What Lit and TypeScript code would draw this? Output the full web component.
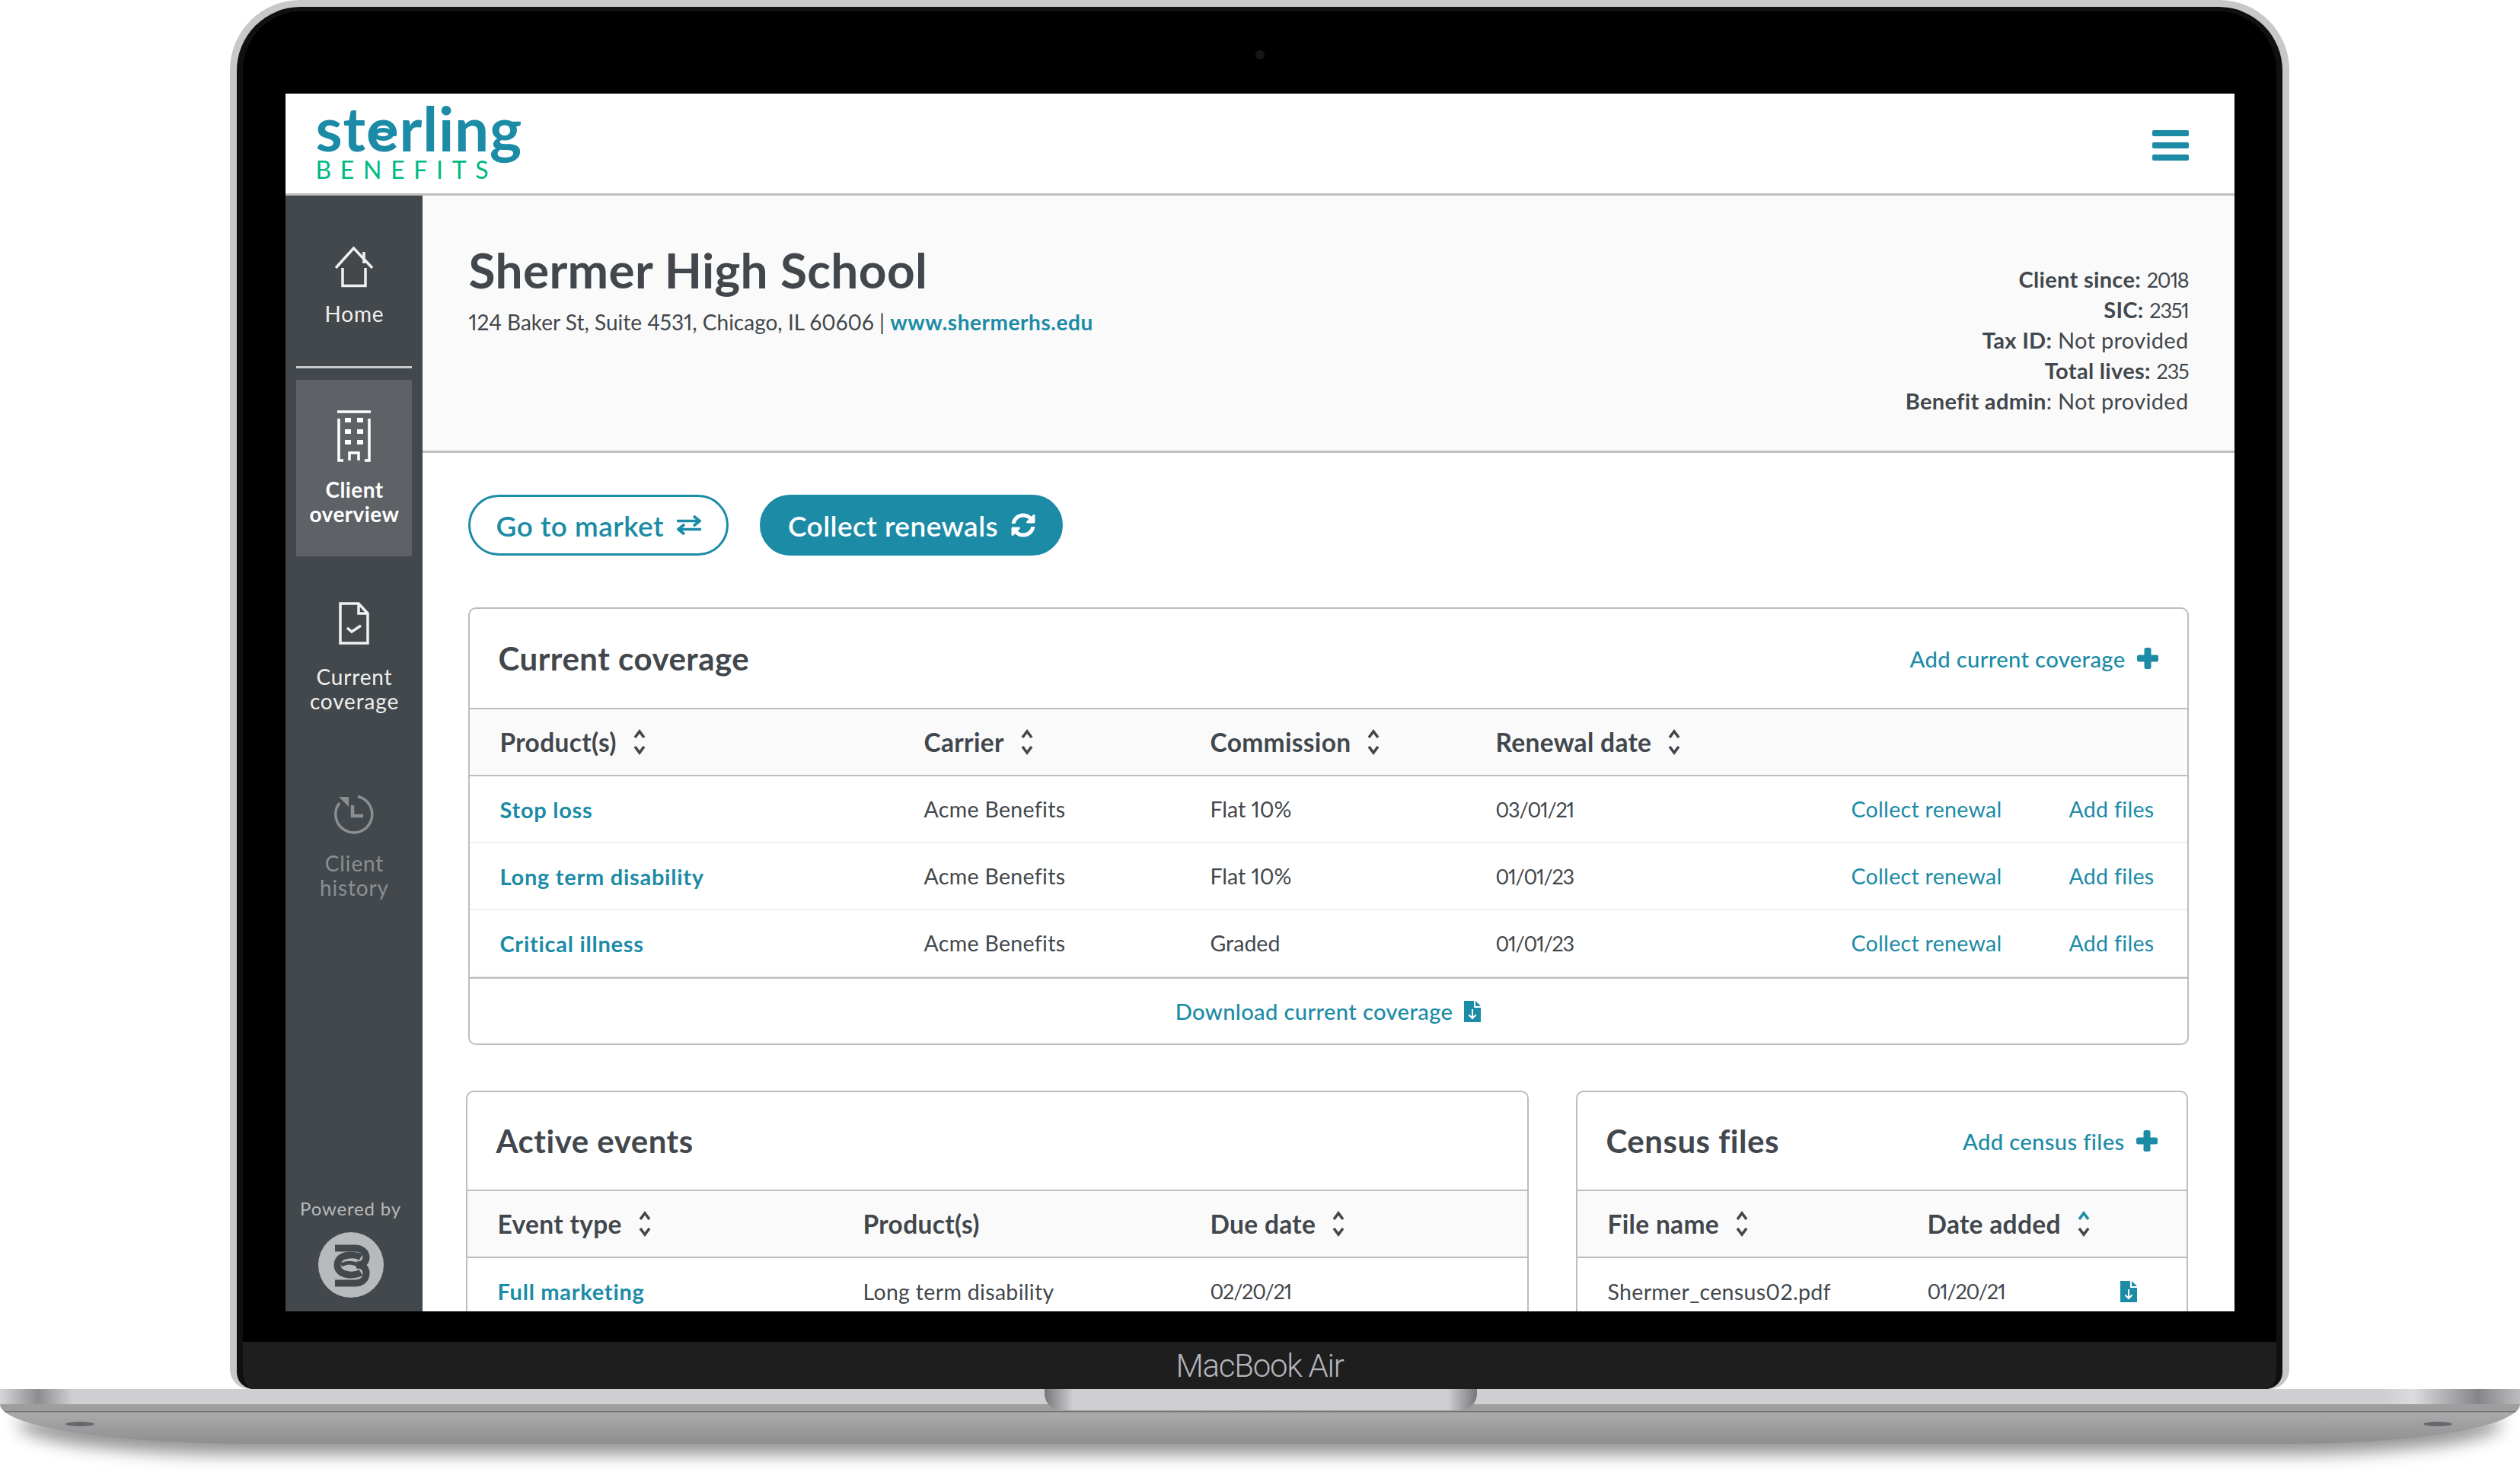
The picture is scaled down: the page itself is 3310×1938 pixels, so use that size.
import { LitElement, html, css, svg } from 'lit'
import { customElement } from 'lit/decorators.js'

const coverage = [
  { product: 'Stop loss', carrier: 'Acme Benefits', commission: 'Flat 10%', renewal: '03/01/21' },
  { product: 'Long term disability', carrier: 'Acme Benefits', commission: 'Flat 10%', renewal: '01/01/23' },
  { product: 'Critical illness', carrier: 'Acme Benefits', commission: 'Graded', renewal: '01/01/23' },
]

const meta = [
  ['Client since:', ' ', '2018'],
  ['SIC:', ' ', '2351'],
  ['Tax ID:', ' ', 'Not provided'],
  ['Total lives:', ' ', '235'],
  ['Benefit admin', ': ', 'Not provided'],
]

const SYNC =
  'M370.72 133.28C339.458 104.008 298.888 87.962 255.848 88c-77.458.068-144.328 53.178-162.791 126.85-1.344 5.363-6.122 9.15-11.651 9.15H24.103c-7.498 0-13.194-6.807-11.807-14.176C33.933 94.924 134.813 8 256 8c66.448 0 126.791 26.136 171.315 68.685L463.03 40.97C478.149 25.851 504 36.559 504 57.941V192c0 13.255-10.745 24-24 24H345.941c-21.382 0-32.09-25.851-16.971-40.971l41.75-41.749zM32 296h134.059c21.382 0 32.09 25.851 16.971 40.971l-41.75 41.75c31.262 29.273 71.835 45.319 114.876 45.28 77.418-.07 144.315-53.144 162.787-126.849 1.344-5.363 6.122-9.15 11.651-9.15h57.304c7.498 0 13.194 6.807 11.807 14.176C478.067 417.076 377.187 504 256 504c-66.448 0-126.791-26.136-171.315-68.685L48.97 471.03C33.851 486.149 8 475.441 8 454.059V320c0-13.255 10.745-24 24-24z'

const sortIcon = (active = false) => html`
  <svg class="sort" width="16" height="34" viewBox="0 0 16 34" fill="none" stroke-width="3.6">
    <path d="M2 11 8 3l6 8" stroke=${active ? '#1b8ba6' : '#41474c'} />
    <path d="M2 23l6 8 6-8" stroke="#41474c" />
  </svg>
`

const plusIcon = html`
  <svg width="28" height="28" viewBox="0 0 28 28" fill="#1b8ba6">
    <rect x="9.5" y="0" width="9" height="28" rx="2.5" />
    <rect x="0" y="9.5" width="28" height="9" rx="2.5" />
  </svg>
`

const fileIcon = html`
  <svg class="file" width="22" height="28" viewBox="0 0 22 28">
    <path d="M0 0h13v9h9v19H0z" fill="#1b8ba6" />
    <path d="M15 0l7 7h-7z" fill="#1b8ba6" />
    <path d="M11 11v12M6.5 18.5 11 23l4.500-4.500" fill="none" stroke="#fff" stroke-width="2" />
  </svg>
`

const homeIcon = svg`
  <path d="M1 28 24.500 2 49 28M38 7v15" />
  <path d="M10 28v23.500h30V28" />
`
const buildingIcon = svg`
  <path d="M0 2h44" />
  <path d="M2 11v55h6M42 11v55h-6" />
  <path d="M16 66V56h12v10" />
  <path d="M10 13h8M26 13h8M10 28h8M26 28h8M10 42h8M26 42h8" stroke-width="6" />
`
const docIcon = svg`
  <path d="M2 2h24l12 13v39H2z" />
  <path d="M26 2v13h12" />
  <path d="M11 34l6 5 12-8" />
`
const historyIcon = svg`
  <path d="M32 4.500A24 24 0 1 1 8 13" />
  <path d="M7 5h13v13z" fill="currentColor" stroke="none" />
  <path d="M25 16v14h14" stroke-width="4.500" />
`

@customElement('app-root')
export class AppRoot extends LitElement {
  static styles = css`
    :host {
      display: block;
      isolation: isolate;
      width: 3310px;
      height: 1938px;
      overflow: hidden;
      background: #fff;
      color: #41474c;
      font-family: Lato, 'Open Sans', sans-serif;
      font-variant-numeric: proportional-nums;
      letter-spacing: 0.02em;
    }

    a {
      color: #1b8ba6;
      text-decoration: none;
    }

    .num {
      font-size: 27px;
      letter-spacing: -0.045em;
    }

    /* laptop frame */
    .lid {
      box-sizing: border-box;
      width: 2705px;
      height: 1825px;
      margin-left: 302px;
      padding: 9px 9px 0;
      background: #c8c8ca;
      border-radius: 92px 92px 26px 26px;
    }

    .bezel {
      box-sizing: border-box;
      height: 100%;
      display: flex;
      flex-direction: column;
      align-items: center;
      background: #000;
      border: solid #101010;
      border-width: 6px 8px 0;
      border-radius: 84px 84px 22px 22px;
      overflow: hidden;
    }

    .camera {
      flex: none;
      width: 12px;
      height: 12px;
      margin: 51px 0 45px;
      border-radius: 50%;
      background: #16161a;
    }

    .chin {
      flex: none;
      align-self: stretch;
      height: 62px;
      margin-top: 40px;
      display: flex;
      align-items: center;
      justify-content: center;
      background: #1e1e1e;
      color: #b4b4ba;
      font: 300 42px Roboto, sans-serif;
      letter-spacing: -0.03em;
    }

    .base {
      position: relative;
      width: 3310px;
      height: 72px;
    }

    .base-top {
      height: 20px;
      background: linear-gradient(
        90deg,
        #d6d6d8 0,
        #8d8d91 50px,
        #cfcfd1 95px,
        #cfcfd1 3130px,
        #dcdcde 3170px,
        #85858a 3255px,
        #bdbdc0 3310px
      );
    }

    .base-body {
      height: 52px;
      box-sizing: border-box;
      border-bottom-left-radius: 330px 52px;
      border-bottom-right-radius: 300px 52px;
      background: linear-gradient(180deg, #9e9e9f 0, #9e9e9f 9px, #737375 9px, #737375 10px, #ababac 11px, #8e8e90 100%);
    }

    .notch {
      position: absolute;
      left: 1372px;
      top: 0;
      width: 568px;
      height: 28px;
      border-radius: 0 0 22px 22px;
      background: linear-gradient(90deg, #77777b 0, #cfcfd1 38px, #cfcfd1 530px, #77777b 100%);
    }

    .foot {
      position: absolute;
      top: 43px;
      width: 38px;
      height: 6px;
      border-radius: 50%;
      background: #66666c;
    }

    .foot.l {
      left: 86px;
    }

    .foot.r {
      left: 3183px;
    }

    .shadow {
      position: absolute;
      z-index: -1;
      left: 24px;
      right: 24px;
      top: 40px;
      height: 46px;
      border-radius: 0 0 300px 300px / 0 0 40px 40px;
      background: rgba(0, 0, 0, 0.42);
      filter: blur(11px);
    }

    /* app screen */
    .screen {
      flex: none;
      width: 2560px;
      height: 1600px;
      display: flex;
      flex-direction: column;
      background: #fff;
      overflow: hidden;
    }

    .topbar {
      flex: none;
      box-sizing: border-box;
      height: 134px;
      padding: 0 60px 0 40px;
      display: flex;
      align-items: center;
      justify-content: space-between;
      border-bottom: 3px solid #bfbfbf;
    }

    .logo {
      align-self: flex-start;
      display: flex;
      flex-direction: column;
      margin-top: 5px;
    }

    .logo-name {
      font-size: 80px;
      font-weight: 700;
      line-height: 80px;
      letter-spacing: 0.01em;
      color: #1b8ba6;
    }

    .logo-e {
      position: relative;
    }

    .logo-e::before {
      content: '';
      position: absolute;
      left: 8px;
      top: 48px;
      width: 28px;
      height: 17px;
      border-radius: 50%;
      background: #1b8ba6;
    }

    .logo-e::after {
      content: '';
      position: absolute;
      left: 15px;
      top: 54px;
      width: 14px;
      height: 5px;
      border-radius: 50%;
      background: #fff;
    }

    .logo-sub {
      font-size: 32px;
      line-height: 30px;
      letter-spacing: 0.365em;
      color: #00b982;
    }

    .burger {
      display: flex;
      flex-direction: column;
      gap: 8px;
      margin-top: 4px;
    }

    .burger i {
      display: block;
      width: 48px;
      height: 8px;
      border-radius: 2px;
      background: #1b8ba6;
    }

    .app {
      flex: 1;
      min-height: 0;
      display: flex;
    }

    .side {
      flex: none;
      box-sizing: border-box;
      width: 180px;
      padding: 0 14px 18px;
      display: flex;
      flex-direction: column;
      align-items: stretch;
      background: #43484c;
      color: #f0f0f0;
      font-size: 28px;
      line-height: 32px;
      text-align: center;
      letter-spacing: 0.03em;
    }

    .nav {
      box-sizing: border-box;
      display: flex;
      flex-direction: column;
      align-items: center;
    }

    .nav span {
      padding-left: 2px;
    }

    .nav svg {
      display: block;
      fill: none;
      stroke: currentColor;
      stroke-width: 3.5;
    }

    .nav.home {
      height: 227px;
      padding-top: 67px;
      border-bottom: 3px solid #c8c8c8;
    }

    .nav.home span {
      margin-top: 18px;
    }

    .nav.active {
      height: 232px;
      margin-top: 15px;
      padding-top: 40px;
      background: #5e6267;
      color: #fff;
      font-weight: 700;
      letter-spacing: 0.015em;
    }

    .nav.active span {
      margin-top: 20px;
    }

    .nav.current {
      margin-top: 60px;
    }

    .nav.current span {
      margin-top: 26px;
    }

    .nav.history {
      margin-top: 105px;
      color: #8b8f92;
    }

    .nav.history span {
      margin-top: 20px;
    }

    .powered {
      margin-top: auto;
      padding-right: 8px;
      display: flex;
      flex-direction: column;
      align-items: center;
      gap: 16px;
      font-size: 24px;
      line-height: 30px;
      color: #b7b9bb;
    }

    .main {
      flex: 1;
      min-width: 0;
      overflow: hidden;
    }

    .client {
      box-sizing: border-box;
      height: 338px;
      padding: 62px 60px 0 61px;
      display: flex;
      justify-content: space-between;
      background: #fafafa;
      border-bottom: 3px solid #bfbfbf;
    }

    h1 {
      margin: 0 0 12px;
      font-size: 64px;
      font-weight: 700;
      line-height: 72px;
      letter-spacing: 0.005em;
    }

    .address {
      font-size: 28px;
      line-height: 40px;
      letter-spacing: 0;
    }

    .address a {
      font-weight: 700;
      letter-spacing: 0.02em;
    }

    .facts {
      padding-top: 28px;
      font-size: 29px;
      line-height: 40px;
      text-align: right;
    }

    .facts > div {
      height: 40px;
    }

    .facts b {
      font-weight: 700;
    }

    .content {
      padding: 55px 60px 0;
    }

    .actions {
      display: flex;
      gap: 41px;
      margin-bottom: 68px;
    }

    .btn {
      box-sizing: border-box;
      height: 80px;
      display: flex;
      align-items: center;
      gap: 17px;
      padding: 0 33px 0 34px;
      border: 3px solid #1b8ba6;
      border-radius: 40px;
      font-size: 37px;
      font-weight: 600;
      letter-spacing: 0.012em;
      color: #1b8ba6;
    }

    .btn.fill {
      background: #1b8ba6;
      color: #fff;
    }

    .card {
      border: 2px solid #bdbdbd;
      border-radius: 10px;
      overflow: hidden;
      background: #fff;
    }

    .card-head {
      height: 128px;
      padding: 0 38px;
      display: flex;
      align-items: center;
      justify-content: space-between;
      border-bottom: 2px solid #bdbdbd;
    }

    .card-head.wide {
      height: 130px;
    }

    h2 {
      margin: 0;
      font-size: 42px;
      font-weight: 700;
      letter-spacing: 0.012em;
    }

    .add {
      display: flex;
      align-items: center;
      gap: 15px;
      font-size: 29.2px;
      font-weight: 500;
      letter-spacing: 0.012em;
    }

    .row {
      display: grid;
      align-items: center;
      padding-left: 40px;
      font-size: 28.5px;
    }

    .row.cov {
      grid-template-columns: 557px 376px 375px 467px 286px 1fr;
    }

    .row.ev {
      grid-template-columns: 480px 456px 1fr;
    }

    .row.cen {
      grid-template-columns: 420px 253px 1fr;
    }

    .thead {
      height: 86px;
      background: #fafafa;
      border-bottom: 2px solid #bdbdbd;
      font-size: 33.5px;
      font-weight: 700;
    }

    .th {
      display: flex;
      align-items: center;
      gap: 22px;
    }

    .tr {
      height: 86px;
      border-bottom: 2px solid #f0f0f0;
    }

    .tr:last-of-type {
      height: 90px;
      border-bottom: 0;
    }

    .flat {
      letter-spacing: 0;
    }

    .row b {
      font-size: 29px;
      font-weight: 700;
      letter-spacing: 0.025em;
    }

    .card-foot {
      height: 85px;
      display: flex;
      align-items: center;
      justify-content: center;
      border-top: 2px solid #bdbdbd;
    }

    .lower {
      display: grid;
      grid-template-columns: 1396px 804px;
      gap: 62px;
      margin: 60px 0 0 -3px;
    }

    .tall {
      align-items: start;
      padding-top: 24px;
      line-height: 40px;
      height: 120px;
    }

    .tall .file {
      display: block;
      margin-top: 6px;
    }
  `

  render() {
    return html`
      <div class="lid">
        <div class="bezel">
          <div class="camera"></div>
          <div class="screen">
            <header class="topbar">
              <div class="logo">
                <span class="logo-name">st<span class="logo-e">e</span>rling</span>
                <span class="logo-sub">BENEFITS</span>
              </div>
              <div class="burger"><i></i><i></i><i></i></div>
            </header>
            <div class="app">
              ${this.renderSide()}
              <main class="main">
                <section class="client">
                  <div>
                    <h1>Shermer High School</h1>
                    <div class="address">
                      124 Baker St, Suite 4531, Chicago, IL 60606 | <a href="#">www.shermerhs.edu</a>
                    </div>
                  </div>
                  <div class="facts">
                    ${meta.map(
                      ([k, sep, v]) =>
                        html`<div><b>${k}</b>${sep}<span class=${/\d/.test(v) ? 'num' : ''}>${v}</span></div>`,
                    )}
                  </div>
                </section>
                <div class="content">
                  <div class="actions">
                    <a class="btn" href="#">
                      Go to market
                      <svg width="32" height="26" viewBox="0 0 32 26" fill="none" stroke="#1b8ba6" stroke-width="3.600">
                        <path d="M0 7.500h29M22 1l8 6.500L22 14" />
                        <path d="M32 18.500H3M10 12l-8 6.500L10 25" />
                      </svg>
                    </a>
                    <a class="btn fill" href="#">
                      Collect renewals
                      <svg width="32" height="32" viewBox="0 0 512 512" fill="#fff"><path d=${SYNC} /></svg>
                    </a>
                  </div>
                  ${this.renderCoverage()}
                  <div class="lower">${this.renderEvents()} ${this.renderCensus()}</div>
                </div>
              </main>
            </div>
          </div>
          <div class="chin">MacBook Air</div>
        </div>
      </div>
      <div class="base">
        <div class="shadow"></div>
        <div class="base-top"></div>
        <div class="base-body"></div>
        <div class="notch"></div>
        <div class="foot l"></div>
        <div class="foot r"></div>
      </div>
    `
  }

  renderSide() {
    return html`
      <nav class="side">
        <div class="nav home">
          <svg width="50" height="54" viewBox="0 0 50 54">${homeIcon}</svg>
          <span>Home</span>
        </div>
        <div class="nav active">
          <svg width="44" height="68" viewBox="0 0 44 68">${buildingIcon}</svg>
          <span>Client<br />overview</span>
        </div>
        <div class="nav current">
          <svg width="40" height="56" viewBox="0 0 40 56">${docIcon}</svg>
          <span>Current<br />coverage</span>
        </div>
        <div class="nav history">
          <svg width="54" height="56" viewBox="0 0 54 56">${historyIcon}</svg>
          <span>Client<br />history</span>
        </div>
        <div class="powered">
          Powered by
          <svg width="86" height="86" viewBox="0 0 86 86">
            <circle cx="43" cy="43" r="43" fill="#b7b9bb" />
            <g fill="none" stroke="#43484c" stroke-width="9">
              <path d="M22 21h26c9 0 15 5 15 12 0 6-4 10-13 10 9 0 13 4 13 11 0 8-6 13-15 13H22" />
              <path d="M56 33c-8-5-31-5-31 10s23 15 31 10" />
              <path d="M30 43c8-4 14-4 22 0" stroke-width="5" />
            </g>
          </svg>
        </div>
      </nav>
    `
  }

  renderCoverage() {
    const heads = ['Product(s)', 'Carrier', 'Commission', 'Renewal date']
    return html`
      <section class="card">
        <div class="card-head wide">
          <h2>Current coverage</h2>
          <a class="add" href="#">Add current coverage ${plusIcon}</a>
        </div>
        <div class="row cov thead">
          ${heads.map((h) => html`<div class="th">${h} ${sortIcon()}</div>`)}
        </div>
        ${coverage.map(
          (c) => html`
            <div class="row cov tr">
              <a href="#"><b>${c.product}</b></a>
              <div>${c.carrier}</div>
              <div class="flat">${c.commission}</div>
              <div class="num">${c.renewal}</div>
              <a href="#">Collect renewal</a>
              <a href="#">Add files</a>
            </div>
          `,
        )}
        <div class="card-foot"><a class="add" href="#">Download current coverage ${fileIcon}</a></div>
      </section>
    `
  }

  renderEvents() {
    return html`
      <section class="card">
        <div class="card-head"><h2>Active events</h2></div>
        <div class="row ev thead">
          <div class="th">Event type ${sortIcon()}</div>
          <div class="th">Product(s)</div>
          <div class="th">Due date ${sortIcon()}</div>
        </div>
        <div class="row ev tall">
          <a href="#"><b>Full marketing</b></a>
          <div>Long term disability<br />Critical illness</div>
          <div class="num">02/20/21</div>
        </div>
      </section>
    `
  }

  renderCensus() {
    return html`
      <section class="card">
        <div class="card-head">
          <h2>Census files</h2>
          <a class="add" href="#">Add census files ${plusIcon}</a>
        </div>
        <div class="row cen thead">
          <div class="th">File name ${sortIcon()}</div>
          <div class="th">Date added ${sortIcon(true)}</div>
        </div>
        <div class="row cen tall">
          <div>Shermer_census02.pdf</div>
          <div class="num">01/20/21</div>
          <div>${fileIcon}</div>
        </div>
      </section>
    `
  }
}
